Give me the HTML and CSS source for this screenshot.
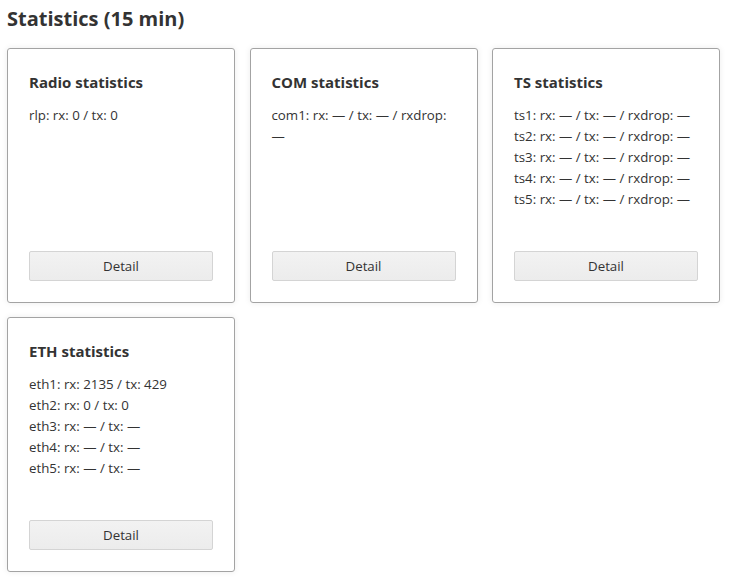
FILE: index.html
```html
<!DOCTYPE html>
<html lang="en">
<head>
  <meta charset="UTF-8" />
  <meta name="viewport" content="width=device-width, initial-scale=1" />
  <title>Statistics</title>
  <link rel="stylesheet" href="styles.css">
</head>
<body>
  <h1>Statistics (15 min)</h1>

  <div class="cards">
    <div class="card">
      <h3>Radio statistics</h3>
      <div class="lines">
        <div>rlp: rx: 0 / tx: 0</div>
      </div>
      <button>Detail</button>
    </div>

    <div class="card">
      <h3>COM statistics</h3>
      <div class="lines">
        <div>com1: rx: — / tx: — / rxdrop: —</div>
      </div>
      <button>Detail</button>
    </div>

    <div class="card">
      <h3>TS statistics</h3>
      <div class="lines">
        <div>ts1: rx: — / tx: — / rxdrop: —</div>
        <div>ts2: rx: — / tx: — / rxdrop: —</div>
        <div>ts3: rx: — / tx: — / rxdrop: —</div>
        <div>ts4: rx: — / tx: — / rxdrop: —</div>
        <div>ts5: rx: — / tx: — / rxdrop: —</div>
      </div>
      <button>Detail</button>
    </div>

    <div class="card">
      <h3>ETH statistics</h3>
      <div class="lines">
        <div>eth1: rx: 2135 / tx: 429</div>
        <div>eth2: rx: 0 / tx: 0</div>
        <div>eth3: rx: — / tx: —</div>
        <div>eth4: rx: — / tx: —</div>
        <div>eth5: rx: — / tx: —</div>
      </div>
      <button>Detail</button>
    </div>
  </div>
</body>
</html>
```

FILE: styles.css
```css
body {
  font-family: "Segoe UI", "Open Sans", sans-serif;
  margin: 0;
  padding: 6px 7px;
  background-color: #fff;
  color: #333;
}
h1 {
  font-size: 20px;
  line-height: 26px;
  margin: 0 0 16px;
  color: #333;
}
.cards {
  display: flex;
  flex-wrap: wrap;
  gap: 14px 14.5px;
}
.card {
  box-sizing: border-box;
  width: 228px;
  height: 255px;
  padding: 23px 21px 21px;
  border: 1px solid #a3a3a3;
  border-radius: 3px;
  box-shadow: 0 0 6px rgba(0, 0, 0, 0.08);
  display: flex;
  flex-direction: column;
}
h3 {
  font-size: 15px;
  line-height: 20px;
  margin: 0 0 13px;
  color: #333;
}
.lines {
  font-size: 13.3px;
  line-height: 21px;
  color: #333;
}
button {
  margin-top: auto;
  width: 100%;
  height: 30px;
  font-family: inherit;
  font-size: 13.3px;
  color: #333;
  background: linear-gradient(#f2f2f2, #ececec);
  border: 1px solid #d4d4d4;
  border-radius: 2px;
}
```
